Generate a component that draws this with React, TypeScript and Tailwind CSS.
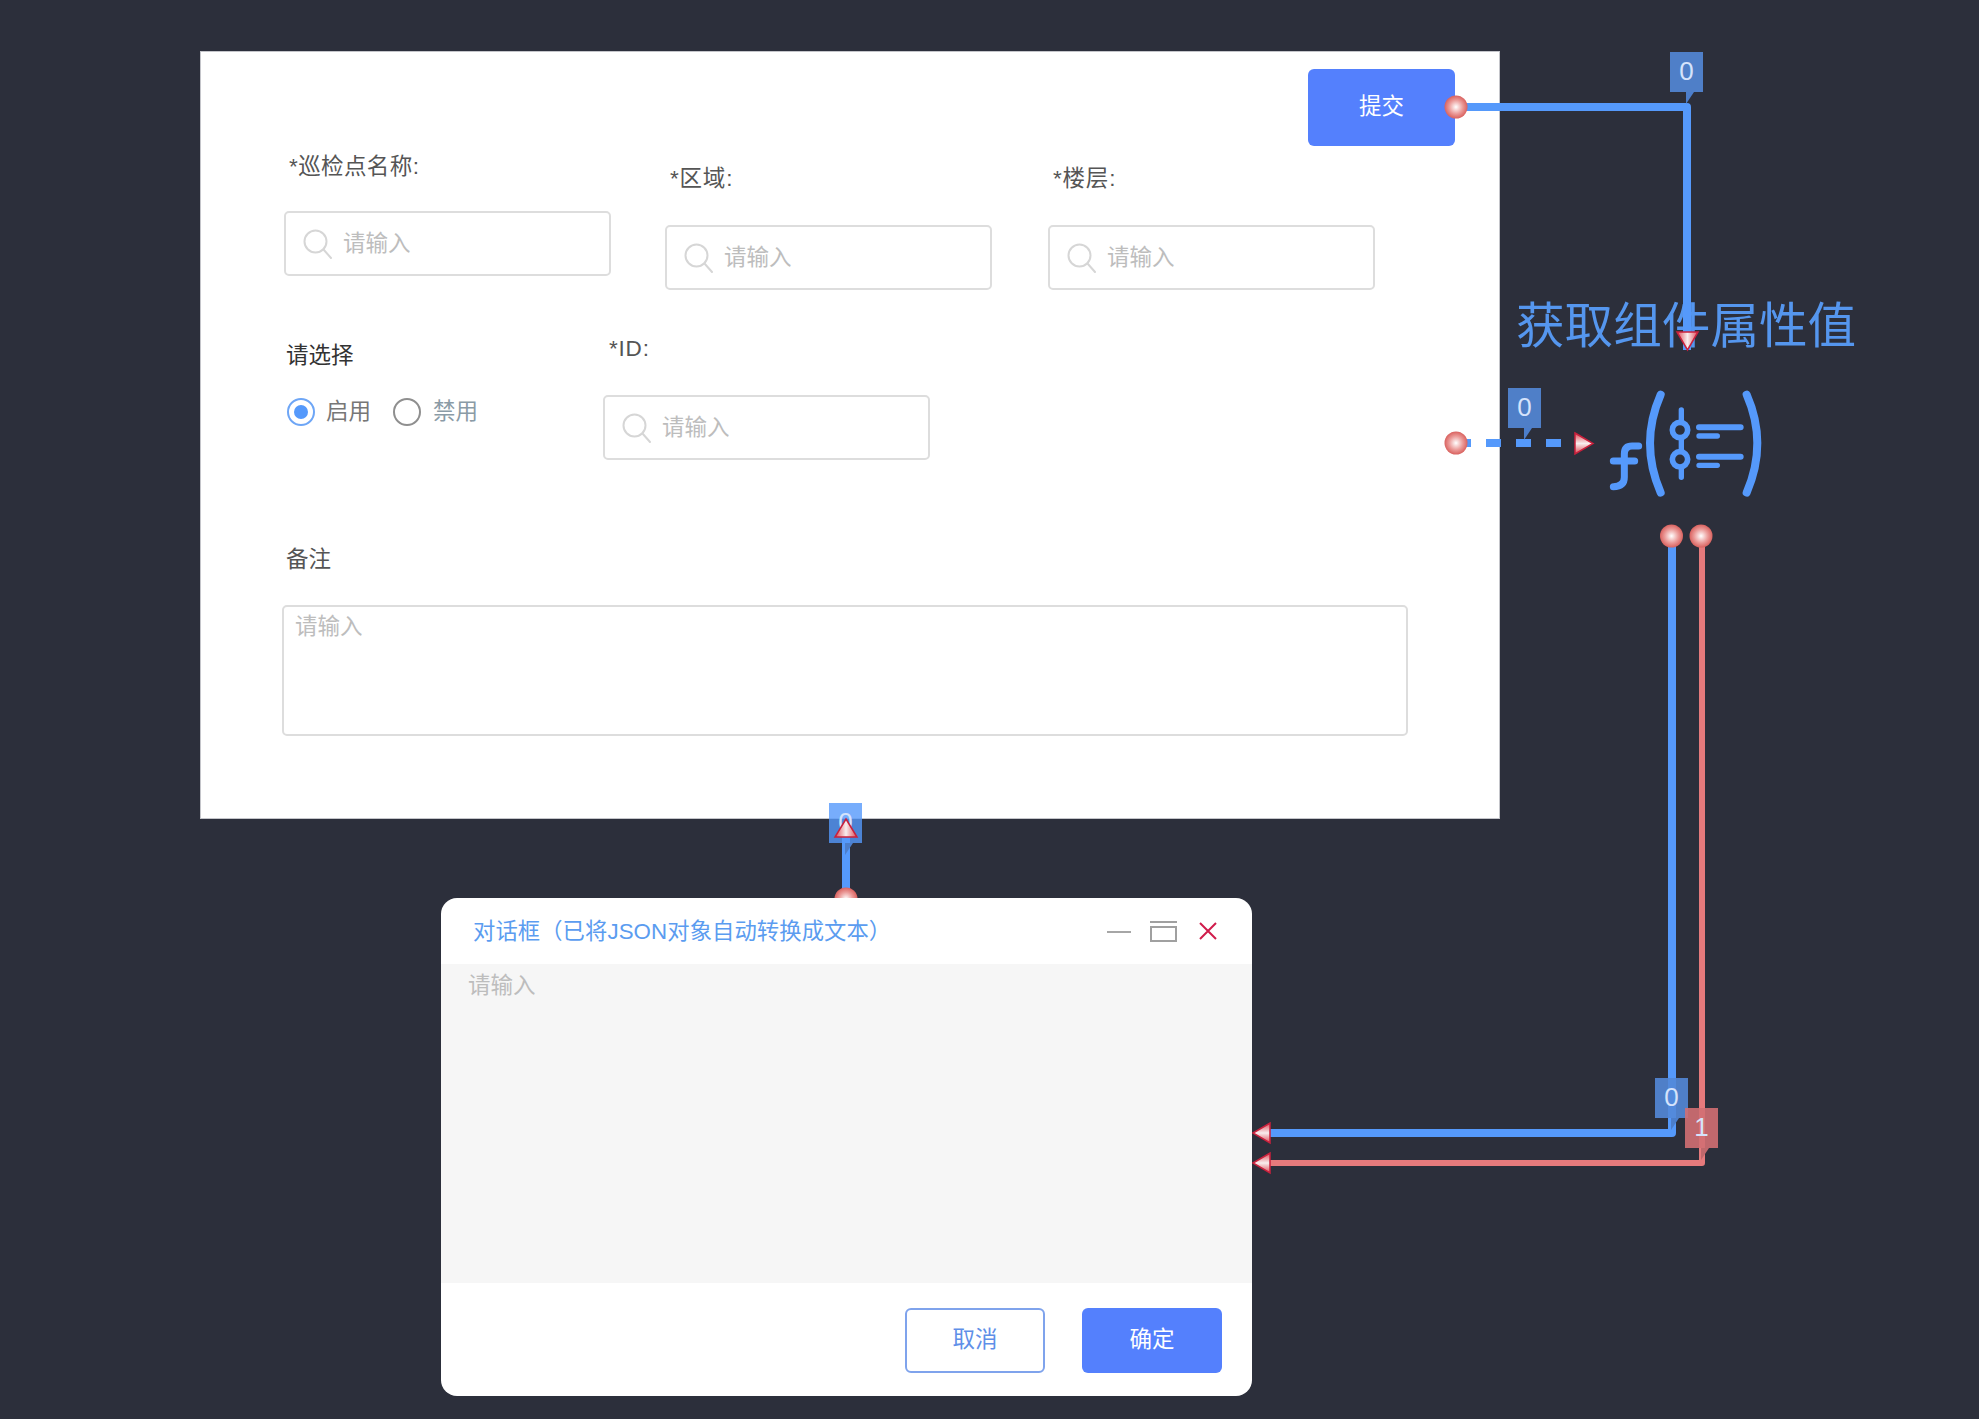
const FONT = "font-['Liberation_Sans','Noto_Sans_CJK_SC',sans-serif]";

function SearchIcon() {
  return (
    <svg width="30" height="30" viewBox="0 0 30 30" fill="none" stroke="#d6d6d6" strokeWidth="2">
      <circle cx="12.5" cy="12.5" r="11" />
      <path d="M20.5 20.5 28 29" strokeLinecap="round" />
    </svg>
  );
}

function SearchInput() {
  return (
    <div className="flex h-[65px] w-[327px] items-center gap-[10px] rounded-[5px] border-2 border-[#dddddd] bg-white pl-[17px]">
      <SearchIcon />
      <span className="text-[22.500px] leading-[32px] text-[#bdbdbd]">请输入</span>
    </div>
  );
}

function Field({ label, className, labelClassName }: { label: string; className: string; labelClassName: string }) {
  return (
    <div className={`absolute flex flex-col ${className}`}>
      <span className={`text-[22.500px] leading-[32px] tracking-[0.4px] text-[#555] ${labelClassName}`}>{label}</span>
      <SearchInput />
    </div>
  );
}

function Badge({ value, color, className }: { value: string; color: string; className: string }) {
  return (
    <div className={`absolute h-[40px] w-[33px] ${className}`}>
      <div className={`flex h-[40px] w-[33px] items-center justify-center pb-[1px] text-[26px] text-[#d5e3fb] ${color}`}>
        {value}
      </div>
      <svg className="absolute top-[40px] left-0" width="33" height="12" viewBox="0 0 33 12">
        <path d="M16 0h8l-8 12z" fill={value === "1" ? "#c0686c" : "#4c7ecb"} />
      </svg>
    </div>
  );
}

function Wires() {
  const blue = "#5599fb";
  const red = "#e67a7c";
  const dots: [number, number][] = [
    [1456, 107],
    [1456, 443],
    [1671.5, 536],
    [1701, 536],
    [846, 899],
  ];
  return (
    <svg className="absolute top-0 left-0" width="1979" height="1419" viewBox="0 0 1979 1419" fill="none">
      <defs>
        <radialGradient id="dot">
          <stop offset="0" stopColor="#ffffff" />
          <stop offset="0.6" stopColor="#eb9a98" />
          <stop offset="1" stopColor="#d9625f" />
        </radialGradient>
      </defs>
      <g strokeLinejoin="round">
        <path d="M1456 107H1687V350" stroke={blue} strokeWidth="8" />
        <path d="M1456 443H1574" stroke={blue} strokeWidth="8" strokeDasharray="15 15" />
        <path d="M1672 536V1133H1262" stroke={blue} strokeWidth="8" />
        <path d="M1702 536V1163H1262" stroke={red} strokeWidth="6" />
        <path d="M846 899V830" stroke={blue} strokeWidth="8" />
      </g>
      {dots.map(([cx, cy]) => (
        <circle key={`${cx}-${cy}`} cx={cx} cy={cy} r="11.500" fill="url(#dot)" />
      ))}
    </svg>
  );
}

function Arrows() {
  return (
    <svg className="absolute top-0 left-0" width="1979" height="1419" viewBox="0 0 1979 1419">
      <defs>
        <linearGradient id="arrowH" x1="0" y1="0" x2="0" y2="1">
          <stop offset="0" stopColor="#dd4a55" />
          <stop offset="0.5" stopColor="#f8eeee" />
          <stop offset="1" stopColor="#dd4a55" />
        </linearGradient>
        <linearGradient id="arrowV" x1="0" y1="0" x2="1" y2="0">
          <stop offset="0" stopColor="#dd4a55" />
          <stop offset="0.5" stopColor="#f8eeee" />
          <stop offset="1" stopColor="#dd4a55" />
        </linearGradient>
      </defs>
      <g stroke="#c9203c" strokeWidth="1.5">
        <path d="M1677 332H1698L1687.500 350Z" fill="url(#arrowV)" />
        <path d="M846 819 857 837H835Z" fill="url(#arrowV)" />
        <path d="M1575 433 1593 443.500 1575 454Z" fill="url(#arrowH)" />
        <path d="M1253 1133 1270 1123V1143Z" fill="url(#arrowH)" />
        <path d="M1253 1163 1270 1153V1173Z" fill="url(#arrowH)" />
      </g>
    </svg>
  );
}

function FunctionIcon() {
  return (
    <svg
      className="absolute top-[380px] left-[1600px]"
      width="175"
      height="125"
      viewBox="0 0 525 375"
      fill="none"
      stroke="#5599fb"
      strokeLinecap="round"
    >
      <path d="M182 44Q118 190 182 338" strokeWidth="24" />
      <path d="M440 44Q504 190 440 338" strokeWidth="24" />
      <circle cx="240" cy="150" r="23" strokeWidth="17" />
      <circle cx="240" cy="238" r="23" strokeWidth="17" />
      <path d="M244 90V125M244 174V214M244 262V292" strokeWidth="16" />
      <path d="M297 142H422M297 230H422" strokeWidth="18" />
      <path d="M297 168H352M297 256H352" strokeWidth="16" />
      <path d="M40 243H104M116 198H96Q73 198 73 222V292Q73 320 40 320" strokeWidth="21" />
    </svg>
  );
}

function FormPanel() {
  return (
    <div className="absolute top-[51px] left-[200px] h-[768px] w-[1300px] border border-[#c4c5ca] bg-white">
      <button className="absolute top-[17px] left-[1107px] h-[77px] w-[147px] rounded-[6px] bg-[#5480fd] pb-[2px] text-[22.500px] text-white">
        提交
      </button>
      <Field label="*巡检点名称:" className="top-[99px] left-[83px]" labelClassName="mb-[28px] ml-[5px]" />
      <Field label="*区域:" className="top-[111px] left-[464px]" labelClassName="mb-[30px] ml-[5px] tracking-[0.8px]" />
      <Field label="*楼层:" className="top-[111px] left-[847px]" labelClassName="mb-[30px] ml-[5px] tracking-[0.8px]" />
      <Field label="*ID:" className="top-[281px] left-[402px]" labelClassName="mb-[30px] ml-[6px] tracking-[0.8px]" />

      <div className="absolute top-[288px] left-[85px] flex flex-col">
        <span className="text-[22.500px] leading-[32px] text-[#333]">请选择</span>
        <div className="mt-[24px] ml-[1px] flex items-center text-[22.500px] leading-[32px]">
          <span className="flex h-[28px] w-[28px] items-center justify-center rounded-full border-2 border-[#6ea6f6]">
            <span className="h-[14px] w-[14px] rounded-full bg-[#5599fb]" />
          </span>
          <span className="ml-[11px] text-[#777]">启用</span>
          <span className="ml-[22px] h-[28px] w-[28px] rounded-full border-2 border-[#8f8f8f]" />
          <span className="ml-[12px] text-[#8a9ba6]">禁用</span>
        </div>
      </div>

      <div className="absolute top-[491px] left-[81px] flex flex-col">
        <span className="mt-[1px] ml-[4px] text-[22.500px] leading-[32px] text-[#555]">备注</span>
        <div className="mt-[29px] h-[131px] w-[1126px] rounded-[5px] border-2 border-[#dddddd] px-[11px] pt-[4px]">
          <span className="text-[22.500px] leading-[32px] text-[#bdbdbd]">请输入</span>
        </div>
      </div>
    </div>
  );
}

function Dialog() {
  return (
    <div className="absolute top-[898px] left-[441px] flex h-[498px] w-[811px] flex-col overflow-hidden rounded-[16px] bg-white">
      <div className="flex h-[66px] items-center pr-[35px] pl-[32px]">
        <span className="pt-[1px] text-[22.300px] tracking-[0.1px] text-[#5b9cf0]">对话框（已将JSON对象自动转换成文本）</span>
        <div className="ml-auto flex items-center">
          <svg width="24" height="20" viewBox="0 0 24 20" fill="none" stroke="#a6a6a6" strokeWidth="2">
            <path d="M0 11H24" />
          </svg>
          <svg className="ml-[19px]" width="27" height="21" viewBox="0 0 27 21" fill="none" stroke="#a0a0a0" strokeWidth="2">
            <path d="M0 1H27M1 6H26V20H1Z" />
          </svg>
          <svg className="ml-[22px]" width="18" height="18" viewBox="0 0 18 18" fill="none" stroke="#d01c4b" strokeWidth="2">
            <path d="M1 1 17 17M17 1 1 17" />
          </svg>
        </div>
      </div>
      <div className="flex-1 bg-[#f6f6f6] pt-[6px] pl-[27px]">
        <span className="text-[22.500px] leading-[32px] text-[#bdbdbd]">请输入</span>
      </div>
      <div className="flex h-[113px] items-center justify-end gap-[37px] pt-[1px] pr-[30px]">
        <button className="h-[65px] w-[140px] rounded-[6px] border-2 border-[#7fa3ec] bg-white text-[22.500px] text-[#5f8fe8]">
          取消
        </button>
        <button className="h-[65px] w-[140px] rounded-[6px] bg-[#5480fd] text-[22.500px] text-white">确定</button>
      </div>
    </div>
  );
}

export default function App() {
  return (
    <div className={`relative h-[1419px] w-[1979px] overflow-hidden bg-[#2c2f3b] ${FONT}`}>
      <FormPanel />
      <span className="absolute top-[296px] left-[1516px] text-[48.600px] leading-[60px] whitespace-nowrap text-[#5596ee]">
        获取组件属性值
      </span>
      <FunctionIcon />
      <Wires />
      <Badge value="0" color="bg-[#5388d8]/90" className="top-[52px] left-[1670px]" />
      <Badge value="0" color="bg-[#5388d8]/90" className="top-[388px] left-[1508px]" />
      <Badge value="0" color="bg-[#5599fb]/80" className="top-[803px] left-[829px]" />
      <Badge value="0" color="bg-[#5388d8]/90" className="top-[1078px] left-[1655px]" />
      <Badge value="1" color="bg-[#d26f73]/90" className="top-[1108px] left-[1685px]" />
      <Arrows />
      <Dialog />
    </div>
  );
}
